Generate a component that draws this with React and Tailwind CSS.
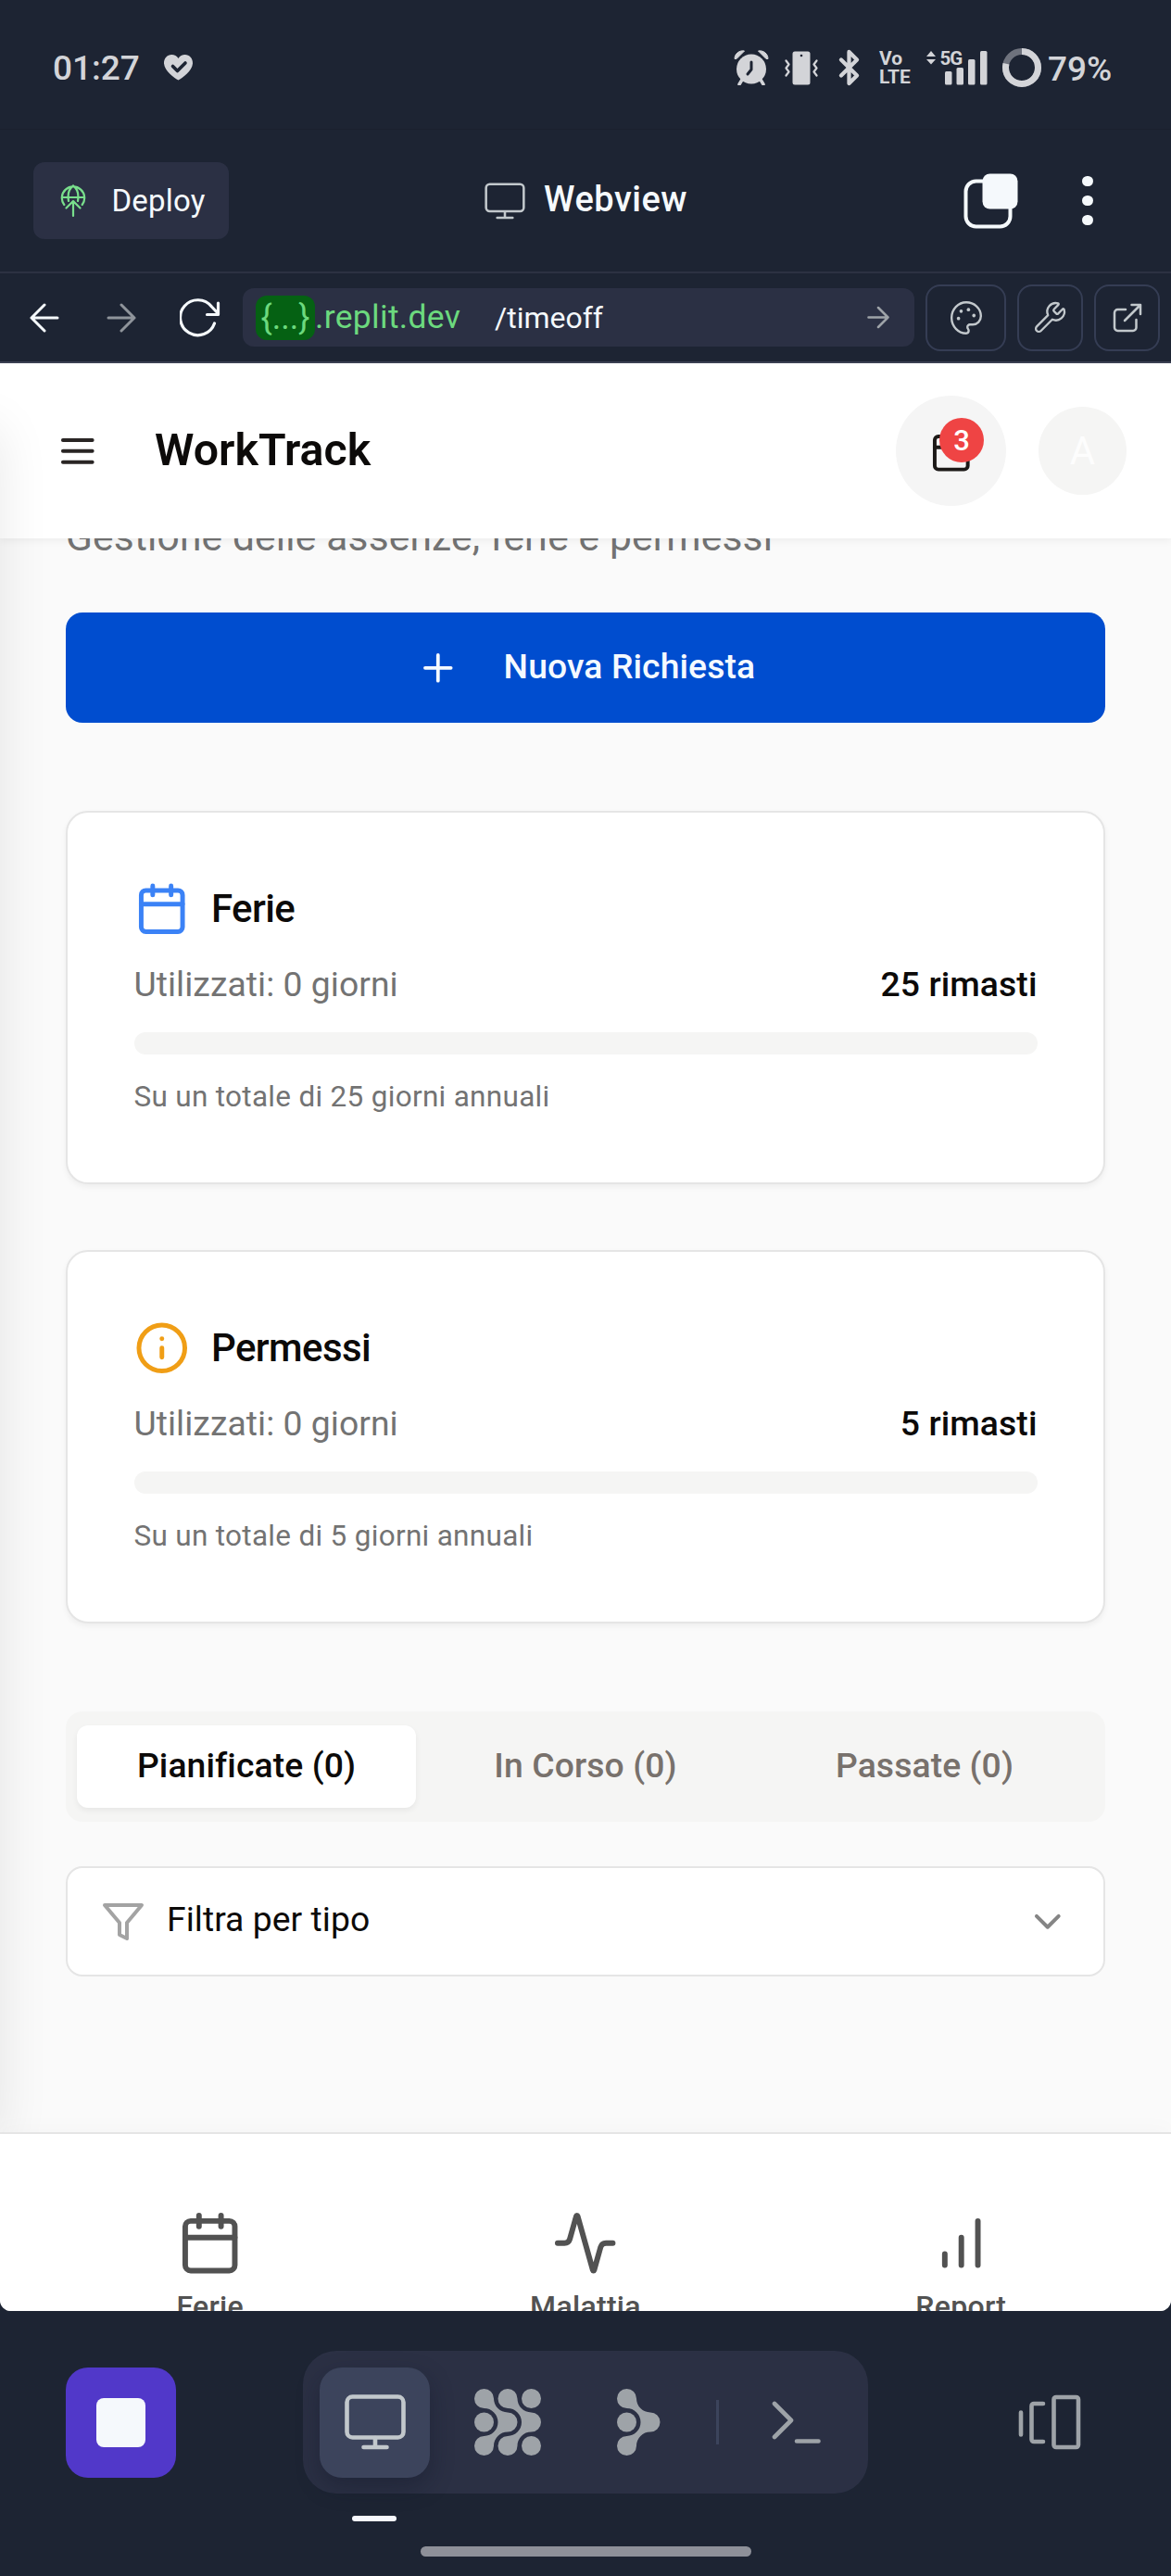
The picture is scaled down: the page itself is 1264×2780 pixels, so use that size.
import React from "react";
import { Activity, Bluetooth, Calendar, ChevronDown, Info, Plus, Wrench } from "lucide-react";

/* ---------- icons ---------- */

function HeartCheck() {
  return (
    <svg width="33" height="30" viewBox="0 0 33 30">
      <path d="M16.500 28.500C12.500 26.500 1.500 18.500 1 10.500 0.800 5 4.500 1 9.300 1c3 0 5.700 1.500 7.200 4C18 2.500 20.700 1 23.700 1 28.500 1 32.200 5 32 10.500c-.5 8-11.500 16-15.500 18z" fill="#d3d4d8" />
      <path d="M10.500 13.500l5 5 8.500-8.500" fill="none" stroke="#1d2433" strokeWidth="3.600" strokeLinecap="round" strokeLinejoin="round" />
    </svg>
  );
}

function Alarm() {
  return (
    <svg width="38" height="38" viewBox="0 0 38 38" fill="none">
      <path d="M9 32l-3 5M29 32l3 5" stroke="#d3d4d8" strokeWidth="3.500" strokeLinecap="round" />
      <circle cx="19" cy="20.500" r="16" fill="#d3d4d8" />
      <path d="M1 9.500C1 4 6 0 11.500 1L3 9.500zM37 9.500C37 4 32 0 26.500 1l8.500 8.500z" fill="#d3d4d8" stroke="#d3d4d8" strokeLinejoin="round" />
      <path d="M19 13v8l-4 5" stroke="#1d2433" strokeWidth="3" strokeLinecap="round" strokeLinejoin="round" />
    </svg>
  );
}

function Vibrate() {
  return (
    <svg width="36" height="37" viewBox="0 0 36 37" fill="none">
      <rect x="8.500" y="0.500" width="19" height="36" rx="2.500" fill="#d3d4d8" />
      <circle cx="18" cy="5" r="1.300" fill="#1d2433" />
      <path d="M1.500 10.500l3 4-3 4 3 4-3 4M34.500 10.500l-3 4 3 4-3 4 3 4" stroke="#d3d4d8" strokeWidth="2.200" strokeLinecap="round" strokeLinejoin="round" />
    </svg>
  );
}

function SignalBars() {
  return (
    <svg width="67" height="37" viewBox="0 0 67 37" fill="#d3d4d8" className="absolute inset-0">
      <path d="M5 0l5 6H0zM0 9h10l-5 5.500z" />
      <rect x="20" y="22" width="7.500" height="14.500" rx="1.500" />
      <rect x="32.500" y="18" width="7.500" height="18.500" rx="1.500" />
      <rect x="45" y="9" width="7.500" height="27.500" rx="1.500" />
      <rect x="58" y="0" width="7.500" height="36.500" rx="1.500" />
    </svg>
  );
}

function BatteryRing() {
  return (
    <svg width="42" height="42" viewBox="0 0 42 42" fill="none" strokeWidth="7">
      <circle cx="21" cy="21" r="17.500" stroke="#6e727d" />
      <circle cx="21" cy="21" r="17.500" stroke="#d3d4d8" pathLength="100" strokeDasharray="79 21" transform="rotate(-90 21 21)" />
    </svg>
  );
}

function DeployGlobe() {
  return (
    <svg width="28" height="36" viewBox="0 0 28 36" fill="none" stroke="#79df8c" strokeWidth="2.200" strokeLinecap="round" strokeLinejoin="round">
      <path d="M4.300 22A12.200 12.200 0 1 1 23.700 22M1.800 14h24.400M14 1.500C9 5 8 12 9 18M14 1.500c5 3.500 6 10.500 5 16.500M14 34V18M6.500 25.500l7.500-7.500 7.500 7.500" />
    </svg>
  );
}

function Monitor({ width, height, color, stroke }) {
  return (
    <svg width={width} height={height} viewBox="0 0 66 60" fill="none" stroke={color} strokeWidth={stroke} strokeLinecap="round" strokeLinejoin="round">
      <rect x="2.500" y="2.500" width="61" height="44" rx="6" />
      <path d="M33 47v10M20.500 57h25" />
    </svg>
  );
}

function Windows() {
  return (
    <svg width="60" height="62" viewBox="0 0 60 62" fill="none">
      <rect x="2.500" y="9.500" width="48" height="49" rx="11" stroke="#f5f9fc" strokeWidth="4" />
      <rect x="20.500" y="1.500" width="38" height="38" rx="8" fill="#f5f9fc" />
    </svg>
  );
}

function Arrow({ width, height, color, flip, stroke = 3 }) {
  return (
    <svg width={width} height={height} viewBox="0 0 32 32" fill="none" stroke={color} strokeWidth={stroke} strokeLinecap="round" strokeLinejoin="round" className={flip ? "rotate-180" : ""}>
      <path d="M2 16h28M16 2l14 14-14 14" />
    </svg>
  );
}

function Reload() {
  return (
    <svg width="44" height="42" viewBox="0 0 44 42" fill="none" stroke="#f5f9fc" strokeWidth="3.200" strokeLinecap="round" strokeLinejoin="round">
      <path d="M37.500 27A19 19 0 1 1 34.500 9l7 7.500M41.500 5v12.500H29.500" />
    </svg>
  );
}

function Palette() {
  return (
    <svg width="38" height="40" viewBox="0 0 24 24" fill="none" stroke="#c2c8cc" strokeWidth="1.500" strokeLinejoin="round" preserveAspectRatio="none">
      <path d="M12 2C6.500 2 2 6.500 2 12s4.500 10 10 10c.926 0 1.648-.746 1.648-1.688 0-.437-.18-.835-.437-1.125-.29-.289-.438-.652-.438-1.125a1.640 1.640 0 0 1 1.668-1.668h1.996c3.051 0 5.555-2.503 5.555-5.554C21.965 6.012 17.461 2 12 2z" />
      <g fill="#c2c8cc" stroke="none">
        <circle cx="6.700" cy="12.400" r="1.150" />
        <circle cx="8.500" cy="7.700" r="1.150" />
        <circle cx="13.500" cy="6.700" r="1.150" />
        <circle cx="17.200" cy="10.500" r="1.150" />
      </g>
    </svg>
  );
}

function External() {
  return (
    <svg width="32" height="32" viewBox="0 0 32 32" fill="none" stroke="#c2c8cc" strokeWidth="2.500" strokeLinecap="round" strokeLinejoin="round">
      <path d="M14 7H5.500a3.500 3.500 0 0 0-3.500 3.500V26.500A3.500 3.500 0 0 0 5.500 30H22a3.500 3.500 0 0 0 3.500-3.500V18M13 19L30 2M20.500 2H30v10" />
    </svg>
  );
}

function Hamburger() {
  return (
    <svg width="47.600" height="47.600" viewBox="0 0 24 24" fill="none" stroke="#292524" strokeWidth="2" strokeLinecap="round">
      <path d="M4 6h16M4 12h16M4 18h16" />
    </svg>
  );
}

function Funnel() {
  return (
    <svg width="48" height="48" viewBox="0 0 24 24" fill="none" stroke="#a3a3a3" strokeWidth="2" strokeLinecap="round" strokeLinejoin="round">
      <path d="M22 3H2l8 9.460V19l4 2v-8.540z" />
    </svg>
  );
}

function Bars() {
  return (
    <svg width="71.400" height="71.400" viewBox="0 0 24 24" fill="none" stroke="#525252" strokeWidth="2" strokeLinecap="round">
      <path d="M12 20V10M18 20V4M6 20v-4" />
    </svg>
  );
}

const blob =
  "M21 10.500A15 15 0 0 0 36 25.500A10.500 10.500 0 0 1 36 46.500A15 15 0 0 0 21 61.500A10.500 10.500 0 1 1 10.500 51A15 15 0 0 0 10.500 21A10.500 10.500 0 1 1 21 10.500Z";

function AgentDots() {
  return (
    <svg width="72" height="72" viewBox="0 0 72 72" fill="#9ea3a8">
      <circle cx="10.500" cy="36" r="10.500" />
      <circle cx="61.500" cy="10.500" r="10.500" />
      <circle cx="61.500" cy="61.500" r="10.500" />
      <path d={blob} />
      <path d={blob} transform="translate(25.500 0)" />
    </svg>
  );
}

function AssistantDots() {
  return (
    <svg width="47" height="72" viewBox="0 0 47 72" fill="#9ea3a8">
      <circle cx="10.500" cy="36" r="10.500" />
      <path d={blob} />
    </svg>
  );
}

function Shell() {
  return (
    <svg width="54" height="48" viewBox="0 0 54 48" fill="none" stroke="#9ea3a8" strokeWidth="4.600" strokeLinecap="round" strokeLinejoin="round">
      <path d="M3 4l18 18L3 40M27 44.500h23.500" />
    </svg>
  );
}

function Carousel() {
  return (
    <svg width="68" height="60" viewBox="0 0 68 60" fill="none" stroke="#9ea3a8" strokeWidth="4.600" strokeLinecap="round" strokeLinejoin="round">
      <path d="M3 19.500v24M27 10H17a2.500 2.500 0 0 0-2.500 2.500v36A2.500 2.500 0 0 0 17 51h10" />
      <rect x="38.500" y="3" width="26.500" height="54" rx="2.500" />
    </svg>
  );
}

/* ---------- chrome ---------- */

function StatusBar() {
  return (
    <div className="flex h-[140px] items-center border-b border-[#1b202e] pr-[64px] pl-[57px] pt-[7px] font-[Roboto] text-[#d3d4d8]">
      <span className="w-[94px] text-[37px] leading-none font-medium">01:27</span>
      <div className="ml-[25px]"><HeartCheck /></div>
      <div className="ml-auto flex items-center">
        <Alarm />
        <div className="ml-[17px]"><Vibrate /></div>
        <Bluetooth className="ml-[13px]" width={41} height={44} strokeWidth={2.5} />
        <div className="ml-[12px] flex w-[34px] flex-col text-[21px] leading-[20px] font-bold">
          <span>Vo</span>
          <span>LTE</span>
        </div>
        <div className="relative ml-[17px] h-[37px] w-[67px]">
          <SignalBars />
          <span className="absolute -top-[1px] left-[14.500px] text-[20.500px] leading-[18px] font-bold tracking-[-1px]">5G</span>
        </div>
        <div className="ml-[15px]"><BatteryRing /></div>
        <span className="ml-[7px] w-[69px] pt-[2px] text-[37px] leading-none font-medium">79%</span>
      </div>
    </div>
  );
}

function TitleBar() {
  return (
    <div className="flex h-[155px] items-center border-b-2 border-[#2c3142] pl-[36px] font-[Roboto] text-[#f5f9fc]">
      <div className="flex h-[83px] w-[211px] items-center rounded-[12px] bg-[#2b3044] pl-[29px]">
        <DeployGlobe />
        <span className="ml-[27.500px] text-[33px] leading-none tracking-[0.200px]">Deploy</span>
      </div>
      <div className="ml-[276px]"><Monitor width={44} height={42} color="#c2c8cc" stroke={3.8} /></div>
      <span className="ml-[20px] w-[162px] pb-[3px] text-[38px] leading-none font-medium tracking-[0.500px]">Webview</span>
      <div className="ml-[291px]"><Windows /></div>
      <div className="ml-[68px] flex flex-col gap-[9.500px]">
        <i className="size-[11.500px] rounded-full bg-[#f5f9fc]" />
        <i className="size-[11.500px] rounded-full bg-[#f5f9fc]" />
        <i className="size-[11.500px] rounded-full bg-[#f5f9fc]" />
      </div>
    </div>
  );
}

function UrlBar() {
  return (
    <div className="flex h-[97px] items-center border-b-2 border-[#3a4052] pr-3 pl-[32px]">
      <Arrow width={32} height={32} color="#f5f9fc" flip />
      <div className="ml-[51px]"><Arrow width={32} height={32} color="#8f949b" /></div>
      <div className="ml-[47px]"><Reload /></div>
      <div className="ml-[24px] flex h-[63px] w-[725px] items-center rounded-[12px] bg-[#2b3044] pr-[27px] pl-[14px] font-[Roboto] leading-none">
        <span className="flex h-[48px] w-[64px] items-center justify-center rounded-[12px] bg-[#056113] text-[36px] text-[#6cd97e]">{"{...}"}</span>
        <span className="w-[194px] text-[35.500px] tracking-[0.300px] text-[#6cd97e]">.replit.dev</span>
        <span className="text-[32px] text-[#f5f9fc]">/timeoff</span>
        <div className="ml-auto"><Arrow width={24} height={25} color="#9ea3a8" stroke={3.4} /></div>
      </div>
      <div className="ml-3 flex h-[72px] w-[87px] items-center justify-center rounded-[16px] border-2 border-[#353d54]"><Palette /></div>
      <div className="ml-3 flex h-[72px] w-[71px] items-center justify-center rounded-[16px] border-2 border-[#353d54]">
        <Wrench width={37} height={37} strokeWidth={1.5} className="text-[#c2c8cc]" />
      </div>
      <div className="ml-3 flex h-[72px] w-[71px] items-center justify-center rounded-[16px] border-2 border-[#353d54]"><External /></div>
    </div>
  );
}

/* ---------- app ---------- */

function AppHeader() {
  return (
    <header className="relative z-10 flex h-[189px] items-center bg-white pr-[48px] pl-[60px] shadow-[0_3px_8px_rgba(0,0,0,0.05)]">
      <Hamburger />
      <h1 className="ml-[59.500px] text-[48.300px] leading-none font-semibold text-[#0c0a09]">WorkTrack</h1>
      <div className="relative ml-auto flex size-[119px] items-center justify-center rounded-full bg-[#f5f5f5]">
        <Calendar width={47.6} height={47.6} strokeWidth={2} className="text-[#1c1917]" />
        <span className="absolute top-[24px] left-[47px] flex size-[48px] items-center justify-center rounded-full bg-[#ef4444] text-[31px] leading-none font-medium text-white">3</span>
      </div>
      <div className="ml-[35px] flex size-[95px] items-center justify-center rounded-full bg-[#f5f5f4] text-[42px] leading-none text-[#fdfdfd]">A</div>
    </header>
  );
}

function BalanceCard({ icon, title, left, total }) {
  return (
    <section className="flex h-[403px] flex-col rounded-[24px] border-2 border-[#e5e5e5] bg-white px-[71.500px] pt-[74px] shadow-[0_3px_6px_rgba(0,0,0,0.05)]">
      <div className="flex h-[60px] items-center gap-[24px]">
        {icon}
        <h2 className="text-[42px] leading-none font-medium tracking-[-0.600px] text-[#0c0a09]">{title}</h2>
      </div>
      <div className="mt-[31px] flex h-[42px] items-center justify-between text-[37.300px] leading-none">
        <span className="tracking-[0.050px] text-[#737373]">Utilizzati: 0 giorni</span>
        <span className="tracking-[0.100px] font-medium text-[#0c0a09]">{left} rimasti</span>
      </div>
      <div className="mt-[30px] h-[24px] shrink-0 rounded-full bg-[#f5f5f4]" />
      <p className="mt-[27.500px] text-[31.500px] leading-[36px] tracking-[0.300px] text-[#737373]">Su un totale di {total} giorni annuali</p>
    </section>
  );
}

function Tabs() {
  return (
    <div className="mt-[95px] grid h-[119px] grid-cols-3 items-center rounded-[18px] bg-[#f5f5f4] px-3 text-center text-[37.300px] leading-[87px] font-medium tracking-[0.100px] text-[#78716c]">
      <span className="rounded-[12px] bg-white pb-[2px] text-[#0c0a09] shadow-[0_3px_6px_rgba(0,0,0,0.06)]">Pianificate (0)</span>
      <span className="pb-[2px]">In Corso (0)</span>
      <span className="pb-[2px]">Passate (0)</span>
    </div>
  );
}

function NavItem({ icon, label }) {
  return (
    <div className="flex flex-col items-center gap-[17px] pt-[82px]">
      {icon}
      <span className="text-[32px] leading-none font-medium tracking-[0.300px]">{label}</span>
    </div>
  );
}

function WorkTrack() {
  return (
    <div className="relative h-[2102px] overflow-hidden rounded-b-[12px] bg-[#fafafa] font-[Roboto]">
      <AppHeader />
      <main className="flow-root h-[1720px] px-[71px]">
        <div className="-mt-[22px] mb-[60px]">
          <p className="text-[42.500px] leading-[42px] tracking-[0.170px] text-[#737373]">Gestione delle assenze, ferie e permessi</p>
        </div>
        <button className="flex h-[119px] w-full items-center rounded-[18px] bg-[#004dcf] pl-[378px] text-[37.300px] leading-[36px] font-medium tracking-[0.100px] text-[#f5faff]">
          <Plus width={47.6} height={47.6} strokeWidth={1.9} />
          <span className="ml-[47px] pb-[3px]">Nuova Richiesta</span>
        </button>
        <div className="mt-[95px] flex flex-col gap-[71px]">
          <BalanceCard icon={<Calendar width={59.5} height={59.5} strokeWidth={2} className="text-[#3b82f6]" />} title="Ferie" left={25} total={25} />
          <BalanceCard icon={<Info width={59.5} height={59.5} strokeWidth={2} className="text-[#f09e16]" />} title="Permessi" left={5} total={5} />
        </div>
        <Tabs />
        <div className="mt-[48px] flex h-[119px] items-center rounded-[18px] border-2 border-[#e5e5e5] bg-white pr-[36px] pl-[36px]">
          <Funnel />
          <span className="ml-[23px] pb-[4px] text-[37.300px] leading-none tracking-[0.050px] text-[#0c0a09]">Filtra per tipo</span>
          <ChevronDown width={47.6} height={47.6} strokeWidth={2} className="ml-auto text-[#858585]" />
        </div>
      </main>
      <div className="absolute top-[70px] bottom-[180px] -left-[100px] z-20 w-[100px] shadow-[0_0_56px_rgba(0,0,0,0.09)]" />
      <nav className="relative z-30 grid h-[193px] grid-cols-3 border-t-2 border-[#e5e5e5] bg-white px-[24px] text-[#525252] shadow-[0_-6px_20px_rgba(0,0,0,0.02)]">
        <NavItem icon={<Calendar width={71.4} height={71.4} strokeWidth={2} />} label="Ferie" />
        <NavItem icon={<Activity width={71.4} height={71.4} strokeWidth={2} />} label="Malattia" />
        <NavItem icon={<Bars />} label="Report" />
      </nav>
    </div>
  );
}

function Dock() {
  return (
    <div className="h-[286px] pt-[43px]">
      <div className="flex h-[154px] items-center pl-[71px]">
        <div className="flex size-[119px] items-center justify-center rounded-[24px] bg-[#5138c9]">
          <i className="size-[53px] rounded-[8px] bg-[#f5f9fc]" />
        </div>
        <div className="ml-[137px] flex h-[154px] w-[610px] items-center rounded-[36px] bg-[#2b3044] pl-[18px]">
          <div className="flex size-[119px] items-center justify-center rounded-[24px] bg-[#3c445c] shadow-[0_10px_24px_rgba(14,21,37,0.35)]">
            <Monitor width={66} height={60} color="#c2c8cc" stroke={4.6} />
          </div>
          <div className="ml-[48px]"><AgentDots /></div>
          <div className="ml-[82px]"><AssistantDots /></div>
          <i className="ml-[60px] h-[48px] w-[2.500px] bg-[#3c445c]" />
          <div className="ml-[57px]"><Shell /></div>
        </div>
        <div className="ml-[162px]"><Carousel /></div>
      </div>
      <div className="mt-[24px] ml-[380px] h-[6px] w-[48px] rounded-[3px] bg-[#f8f9ff]" />
      <div className="mx-auto mt-[27px] h-[11px] w-[357px] rounded-full bg-[#8e9099]" />
    </div>
  );
}

export default function App() {
  return (
    <div className="h-[2780px] w-[1264px] overflow-hidden bg-[#1d2433]">
      <StatusBar />
      <TitleBar />
      <UrlBar />
      <WorkTrack />
      <Dock />
    </div>
  );
}
